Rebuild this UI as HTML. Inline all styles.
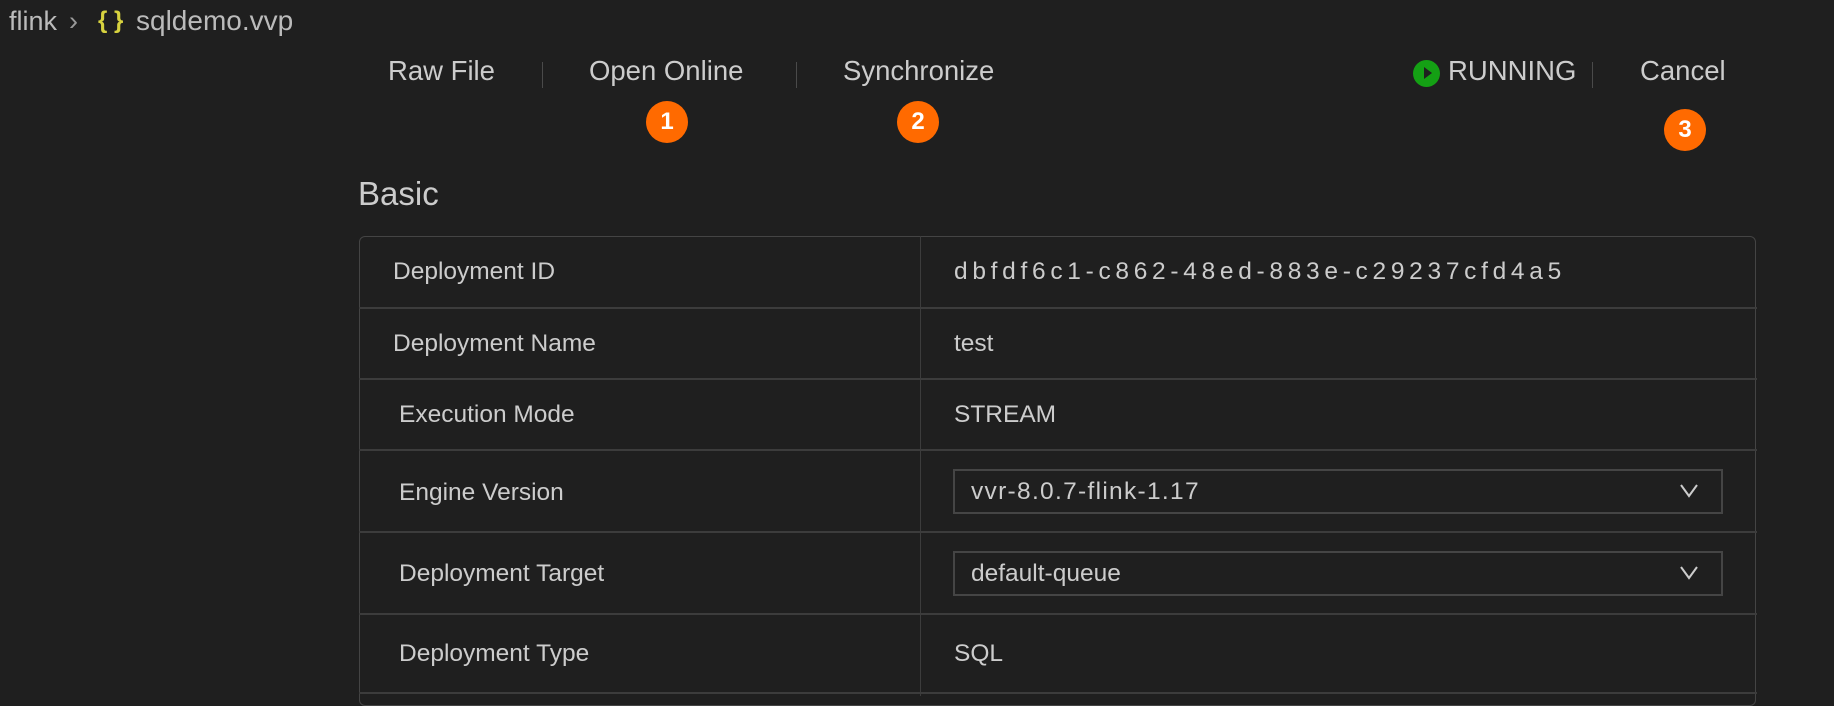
<!DOCTYPE html>
<html><head><style>
body{margin:0;width:1834px;height:696px;background:#1f1f1f;overflow:hidden;font-family:"Liberation Sans",sans-serif;color:#cccccc;position:relative}
.a{position:absolute;white-space:nowrap}
.n{font-size:27.5px;top:55px}
.sep{position:absolute;width:1px;height:26px;background:#4a4a4a}
.b{position:absolute;width:42px;height:42px;border-radius:50%;background:#ff6a00;color:#fff;font-size:24px;font-weight:bold;text-align:center;line-height:42px}
.t{position:absolute;left:359px;top:236px;width:1397px;height:470px;border:1.5px solid #444;border-radius:6px;box-sizing:border-box}
.h{position:absolute;left:359px;width:1398px;height:2px;background:#3c3c3c}
.l{position:absolute;font-size:24.5px;color:#cccccc;transform:translateY(-50%);white-space:nowrap}
.sel{position:absolute;left:953px;width:770px;height:45px;border:2px solid #454545;box-sizing:border-box}
.sel span{position:absolute;left:16px;top:50%;transform:translateY(-50%);font-size:24.5px}
.bc{position:absolute;top:6px;font-size:27px;color:#bbb;white-space:nowrap}
</style></head><body>
<div class="bc" style="left:9px">flink</div>
<div class="bc" style="left:69px;color:#999">&#x203A;</div>
<div class="bc" style="left:98px;color:#d7d23f;font-weight:bold;font-size:24px;top:7px">{ }</div>
<div class="bc" style="left:136px;font-size:28px;top:5px">sqldemo.vvp</div>
<div class="a n" style="left:388px">Raw File</div>
<div class="sep" style="left:542px;top:62px"></div>
<div class="a n" style="left:589px">Open Online</div>
<div class="sep" style="left:796px;top:62px"></div>
<div class="a n" style="left:843px">Synchronize</div>
<div class="b" style="left:646px;top:101px">1</div>
<div class="b" style="left:897px;top:101px">2</div>
<div style="position:absolute;left:1413px;top:60px;width:27px;height:27px;border-radius:50%;background:#14a014"></div>
<div style="position:absolute;left:1424px;top:67px;width:0;height:0;border-left:8px solid #1f1f1f;border-top:6px solid transparent;border-bottom:6px solid transparent"></div>
<div class="a n" style="left:1448px">RUNNING</div>
<div class="sep" style="left:1592px;top:62px"></div>
<div class="a n" style="left:1640px">Cancel</div>
<div class="b" style="left:1664px;top:109px">3</div>
<div class="a" style="left:358px;top:175px;font-size:33px">Basic</div>
<div class="t"></div>
<div style="position:absolute;left:920px;top:236px;width:1px;height:460px;background:#3c3c3c"></div>
<div class="h" style="top:307px"></div><div class="h" style="top:378px"></div><div class="h" style="top:449px"></div><div class="h" style="top:531px"></div><div class="h" style="top:613px"></div><div class="h" style="top:692px"></div>
<div class="l" style="left:393px;top:272px">Deployment ID</div><div class="l" style="left:954px;top:272px;letter-spacing:4.7px">dbfdf6c1-c862-48ed-883e-c29237cfd4a5</div>
<div class="l" style="left:393px;top:344px">Deployment Name</div><div class="l" style="left:954px;top:344px">test</div>
<div class="l" style="left:399px;top:415px">Execution Mode</div><div class="l" style="left:954px;top:415px">STREAM</div>
<div class="l" style="left:399px;top:493px">Engine Version</div>
<div class="sel" style="top:469px"><span style="letter-spacing:1.3px">vvr-8.0.7-flink-1.17</span><svg style="position:absolute;right:22px;top:11px" width="20" height="18"><path d="M2 3 L10 14 L18 3" stroke="#ccc" stroke-width="2" fill="none"/></svg></div>
<div class="l" style="left:399px;top:574px">Deployment Target</div>
<div class="sel" style="top:551px"><span>default-queue</span><svg style="position:absolute;right:22px;top:11px" width="20" height="18"><path d="M2 3 L10 14 L18 3" stroke="#ccc" stroke-width="2" fill="none"/></svg></div>
<div class="l" style="left:399px;top:654px">Deployment Type</div><div class="l" style="left:954px;top:654px">SQL</div>
</body></html>
